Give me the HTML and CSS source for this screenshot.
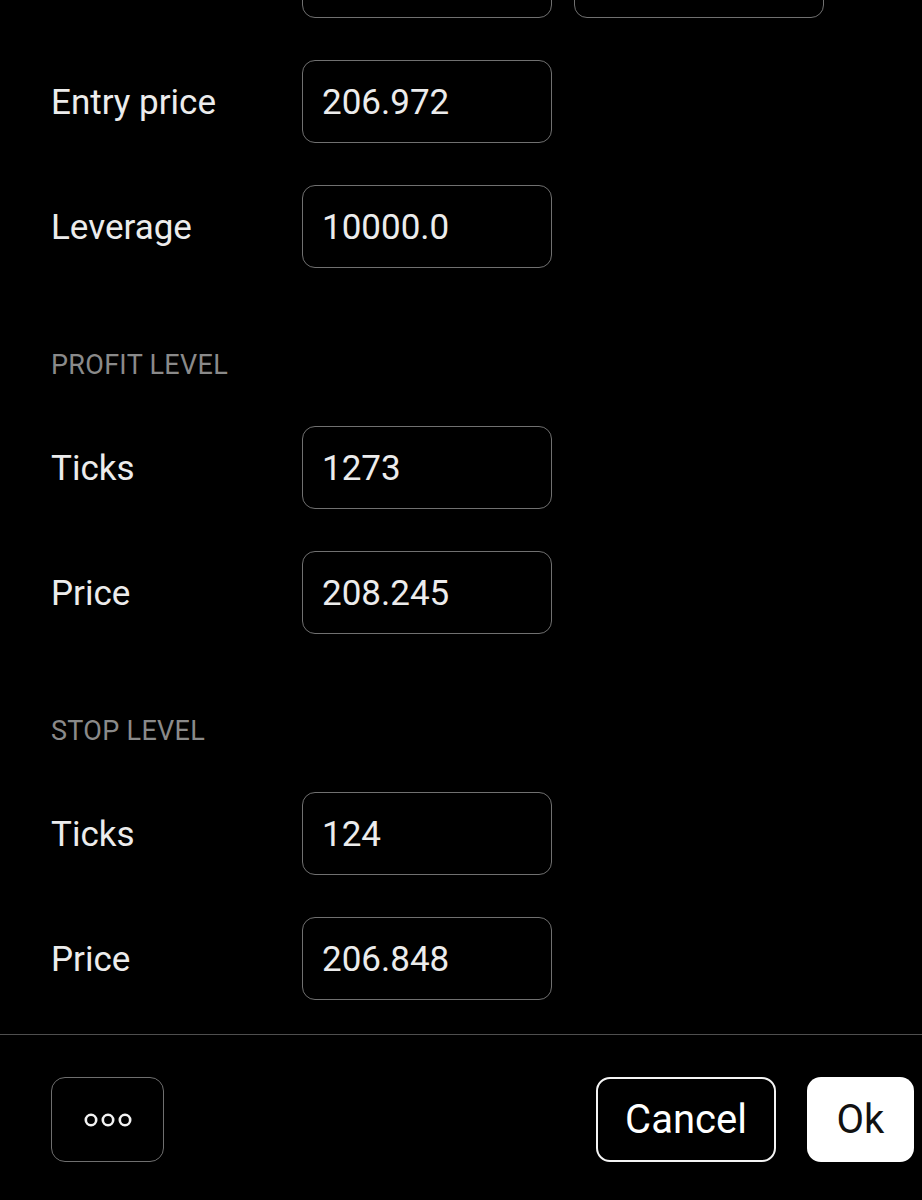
FILE: index.html
```html
<!DOCTYPE html>
<html>
<head>
  <meta http-equiv="Content-Type" content="text/html; charset=utf-8" />
  <title>Order levels</title>
<link rel="stylesheet" href="styles.css">
</head>
<body>

<div class="sheet">
  <div class="form">
    <div class="row">
      <span class="label"></span>
      <input class="field" type="text" value="">
      <input class="field" type="text" value="">
    </div>
    <div class="row">
      <span class="label">Entry price</span>
      <input class="field" type="text" value="206.972">
    </div>
    <div class="row">
      <span class="label">Leverage</span>
      <input class="field" type="text" value="10000.0">
    </div>

    <div class="section-title">PROFIT LEVEL</div>
    <div class="row">
      <span class="label">Ticks</span>
      <input class="field" type="text" value="1273">
    </div>
    <div class="row">
      <span class="label">Price</span>
      <input class="field" type="text" value="208.245">
    </div>

    <div class="section-title">STOP LEVEL</div>
    <div class="row">
      <span class="label">Ticks</span>
      <input class="field" type="text" value="124">
    </div>
    <div class="row">
      <span class="label">Price</span>
      <input class="field" type="text" value="206.848">
    </div>
  </div>

  <div class="footer">
    <button class="btn btn-more" type="button">
      <svg width="54" height="16" viewBox="0 0 54 16">
        <circle cx="10" cy="8" r="5.2" fill="none" stroke="#f2f2f2" stroke-width="2.6"/>
        <circle cx="27" cy="8" r="5.2" fill="none" stroke="#f2f2f2" stroke-width="2.6"/>
        <circle cx="44" cy="8" r="5.2" fill="none" stroke="#f2f2f2" stroke-width="2.6"/>
      </svg>
    </button>
    <div class="spacer"></div>
    <button class="btn btn-cancel" type="button">Cancel</button>
    <button class="btn btn-ok" type="button">Ok</button>
  </div>
</div>

</body>
</html>
```

FILE: styles.css
```css
html, body {
    margin: 0;
    background-color: #000;
}
body {
    font-family: Roboto, "Liberation Sans", sans-serif;
    color: #ececec;
    overflow: hidden;
}

.sheet {
    height: 1200px;
    display: flex;
    flex-direction: column;
}

.form {
    display: flex;
    flex-direction: column;
    gap: 42px;
    margin-top: -65px;
    padding: 0 0 34px 51px;
    border-bottom: 1.5px solid #4f4f4f;
}

.row {
    display: flex;
    align-items: center;
    gap: 22px;
}
.label {
    width: 251px;
    margin-right: -22px;
    padding-top: 2px;
    font-size: 35px;
    color: #ececec;
}
.field {
    box-sizing: border-box;
    width: 250px;
    height: 83px;
    padding: 2px 0 0 19px;
    border: 1.5px solid #707070;
    border-radius: 13px;
    background-color: #000;
    color: #ececec;
    font-family: Roboto, "Liberation Sans", sans-serif;
    font-size: 35px;
    outline: none;
}

.section-title {
    padding: 39px 0 3px;
    line-height: 32px;
    font-size: 27px;
    letter-spacing: 0.3px;
    color: #8a8a8a;
}

.footer {
    display: flex;
    align-items: center;
    gap: 31px;
    padding: 42px 8px 0 51px;
}
.spacer {
    flex: 1;
}
.btn {
    box-sizing: border-box;
    height: 85px;
    border-radius: 14px;
    font-family: Roboto, "Liberation Sans", sans-serif;
    font-size: 40px;
    cursor: pointer;
}
.btn-more {
    width: 113px;
    border: 1.5px solid #6f6f6f;
    background-color: #000;
    display: flex;
    align-items: center;
    justify-content: center;
    padding: 0;
}
.btn-cancel {
    width: 180px;
    border: 2px solid #f4f4f4;
    background-color: #000;
    color: #fff;
}
.btn-ok {
    width: 107px;
    border: none;
    background-color: #fff;
    color: #111;
}
```
